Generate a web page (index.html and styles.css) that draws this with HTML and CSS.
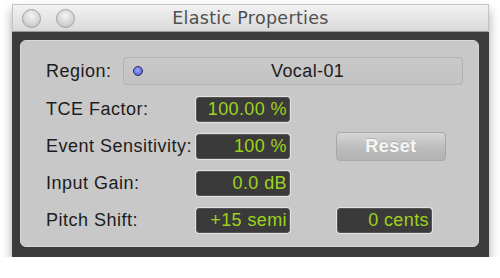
FILE: index.html
```html
<!DOCTYPE html>
<html lang="en">
<head>
    <meta charset="UTF-8">
    <title>Elastic Properties</title>
    <link rel="stylesheet" href="styles.css">
</head>
<body>
    <div class="window">
        <div class="titlebar">
            <div class="lights">
                <span class="light"></span>
                <span class="light"></span>
            </div>
            <div class="title">Elastic Properties</div>
        </div>

        <div class="frame">
            <div class="panel">
                <div class="row region-row">
                    <span class="label region-label">Region:</span>
                    <div class="region-field">
                        <span class="dot"></span>
                        <span class="region-name">Vocal-01</span>
                    </div>
                </div>

                <div class="row">
                    <span class="label">TCE Factor:</span>
                    <div class="field">100.00 %</div>
                </div>

                <div class="row">
                    <span class="label">Event Sensitivity:</span>
                    <div class="field">100 %</div>
                    <button class="reset">Reset</button>
                </div>

                <div class="row">
                    <span class="label">Input Gain:</span>
                    <div class="field">0.0 dB</div>
                </div>

                <div class="row">
                    <span class="label">Pitch Shift:</span>
                    <div class="field">+15 semi</div>
                    <div class="field cents">0 cents</div>
                </div>
            </div>
        </div>
    </div>
</body>
</html>
```

FILE: styles.css
```css
body {
    margin: 0;
    background-color: #ffffff;
    font-family: "Liberation Sans", Arial, sans-serif;
}
.window {
    width: 477px;
    margin: 4px 0 0 12px;
    box-shadow: 0 6px 10px rgba(0, 0, 0, 0.35);
}
.titlebar {
    position: relative;
    height: 28px;
    display: flex;
    align-items: center;
    justify-content: center;
    background: linear-gradient(#f2f2f2, #d9d9d9);
    border: 1px solid #c4c4c4;
    border-bottom: 1px solid #9a9a9a;
    box-sizing: border-box;
}
.lights {
    position: absolute;
    left: 9px;
    top: 4px;
    display: flex;
    gap: 15px;
}
.light {
    width: 17px;
    height: 17px;
    border-radius: 50%;
    border: 1px solid #a3a3a3;
    background: radial-gradient(circle at 50% 35%, #f4f4f4 0%, #d6d6d6 55%, #bcbcbc 100%);
}
.title {
    font-family: "DejaVu Sans", sans-serif;
    font-size: 17.5px;
    color: #505050;
    letter-spacing: 0.3px;
}
.frame {
    background-color: #3b3b3b;
    padding: 8px 10px 10px 8px;
}
.panel {
    background-color: #c8c8c8;
    border: 1px solid #d8d8d8;
    border-radius: 6px;
    padding: 16px 15px 13px 25px;
    display: flex;
    flex-direction: column;
    gap: 12px;
}
.row {
    display: flex;
    align-items: center;
    height: 25px;
}
.region-row {
    height: 28px;
}
.label {
    width: 150px;
    font-size: 18px;
    letter-spacing: 0.5px;
    color: #1c1c1c;
    flex-shrink: 0;
}
.region-label {
    width: 77px;
}
.region-field {
    flex: 1;
    height: 28px;
    display: flex;
    align-items: center;
    box-sizing: border-box;
    border: 1px solid #b2b2b2;
    border-radius: 4px;
    background: linear-gradient(#c9c9c9, #c3c3c3);
    padding-left: 9px;
}
.dot {
    width: 8px;
    height: 8px;
    border-radius: 50%;
    background: radial-gradient(circle at 45% 40%, #9aa8ff, #4450d8);
    border: 1px solid #2a2a50;
}
.region-name {
    font-size: 18px;
    letter-spacing: 0.4px;
    color: #1c1c1c;
    margin-left: 128px;
}
.field {
    width: 94px;
    height: 25px;
    box-sizing: border-box;
    background-color: #3a3a3a;
    border: 1px solid #555;
    border-radius: 3px;
    box-shadow: 0 0 0 1px #e2e2e2;
    color: #9fd21c;
    font-size: 18px;
    letter-spacing: 0.4px;
    text-align: right;
    padding-right: 2px;
    line-height: 23px;
    white-space: nowrap;
}
.cents {
    margin-left: 47px;
    width: 95px;
}
.reset {
    margin-left: 46px;
    width: 110px;
    height: 29px;
    border: 1px solid #a8a8a8;
    border-radius: 4px;
    background: linear-gradient(#d6d6d6, #bcbcbc 55%, #b2b2b2);
    color: #f6f6f6;
    font-family: "Liberation Sans", Arial, sans-serif;
    font-weight: bold;
    font-size: 18px;
    letter-spacing: 0.5px;
    text-shadow: 0 -1px 0 rgba(0, 0, 0, 0.15);
}
```
